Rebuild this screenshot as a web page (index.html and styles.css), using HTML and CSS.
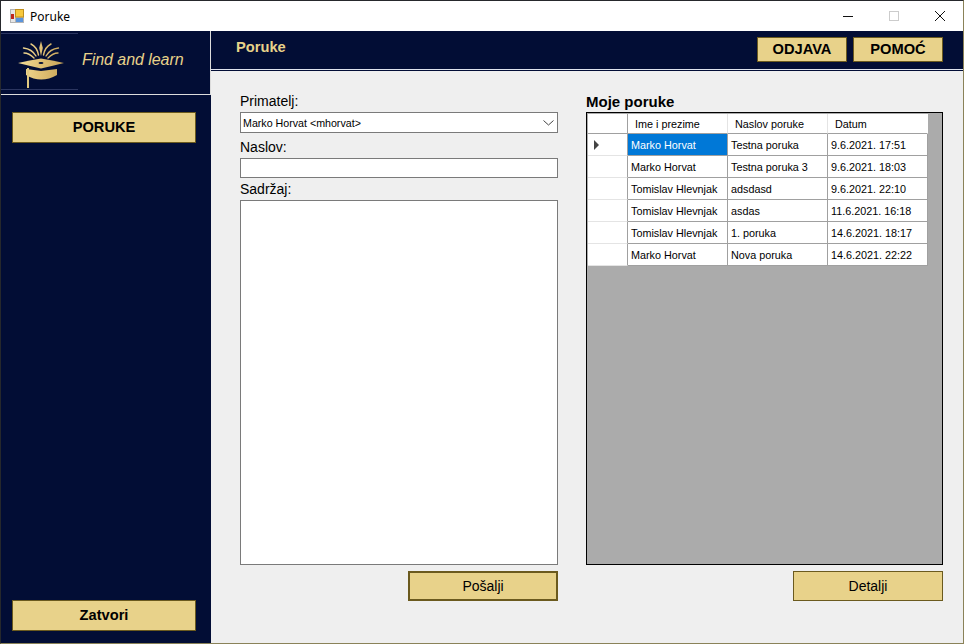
FILE: index.html
```html
<!DOCTYPE html>
<html lang="en">

<head>
  <meta charset="UTF-8">
  <meta name="viewport" content="width=device-width, initial-scale=1.0">
  <title>Poruke</title>
  <link rel="stylesheet" href="styles.css">
</head>

<body>

  <div class="window">
    <div class="titlebar">
      <svg class="app-icon" width="14" height="14" viewBox="0 0 14 14">
        <rect x="0" y="0" width="14" height="14" fill="#b4b4b4"/>
        <rect x="1" y="1" width="4" height="12" fill="#e6e6e6"/>
        <rect x="1" y="5" width="3" height="5" fill="#c0281c"/>
        <rect x="5.500" y="0.500" width="8" height="7.500" fill="#f7c83c" stroke="#c08f1c"/>
        <rect x="6" y="9" width="7" height="4" fill="#5a94dc"/>
      </svg>
      <span class="title-text">Poruke</span>
      <div class="window-controls">
        <div class="win-btn">
          <svg width="12" height="12" viewBox="0 0 12 12"><path d="M1 6.500H11" stroke="#111" fill="none"/></svg>
        </div>
        <div class="win-btn">
          <svg width="12" height="12" viewBox="0 0 12 12"><rect x="1.500" y="1.500" width="9" height="9" stroke="#ccc" fill="none"/></svg>
        </div>
        <div class="win-btn">
          <svg width="12" height="12" viewBox="0 0 12 12"><path d="M1 1L11 11M11 1L1 11" stroke="#111" fill="none"/></svg>
        </div>
      </div>
    </div>

    <div class="app">
      <div class="sidebar">
        <div class="brand">
          <div class="logo">
            <svg width="77" height="55" viewBox="1 34 77 55">
              <defs>
                <linearGradient id="gold" gradientUnits="userSpaceOnUse" x1="18" y1="0" x2="64" y2="0">
                  <stop offset="0" stop-color="#f2dc98"/>
                  <stop offset="0.5" stop-color="#e0c074"/>
                  <stop offset="1" stop-color="#c8a458"/>
                </linearGradient>
              </defs>
              <g fill="none" stroke="url(#gold)" stroke-width="1.4" stroke-linecap="round">
                <path d="M38.500 55Q37 47 31 44"/>
                <path d="M43.500 55Q45 47 51 44"/>
                <path d="M36 56Q32 49 23.500 48"/>
                <path d="M46 56Q50 49 58.500 48"/>
                <path d="M34 58Q29 53 24 53"/>
                <path d="M48 58Q53 53 58 53"/>
              </g>
              <path d="M41 41L42.800 48L41 56L39.200 48Z" fill="url(#gold)"/>
              <path d="M18 63Q30 60 41 58.500Q52 60 64 63Q52 66 41 68.500Q30 66 18 63Z" fill="url(#gold)"/>
              <ellipse cx="41" cy="63" rx="2.500" ry="1" fill="#020d35"/>
              <path d="M26 69L41 71L57 69V75Q41 84 26 75Z" fill="url(#gold)"/>
              <rect x="27" y="68" width="2" height="20" fill="#e0c880"/>
            </svg>
          </div>
          <span class="brand-name">Find and learn</span>
        </div>
        <div class="side-nav">
          <button class="gold-btn side-btn">PORUKE</button>
          <button class="gold-btn side-btn">Zatvori</button>
        </div>
      </div>

      <div class="content">
        <div class="header">
          <span class="header-title">Poruke</span>
          <div class="header-actions">
            <button class="gold-btn top-btn">ODJAVA</button>
            <button class="gold-btn top-btn">POMOĆ</button>
          </div>
        </div>

        <div class="panels">
          <div class="form-panel">
            <label class="field-label">Primatelj:</label>
            <div class="combo">
              <span>Marko Horvat &lt;mhorvat&gt;</span>
              <svg width="11" height="6" viewBox="0 0 11 6"><path d="M0.500 0.500L5.500 5L10.500 0.500" stroke="#444" fill="none"/></svg>
            </div>
            <label class="field-label">Naslov:</label>
            <div class="text-input"></div>
            <label class="field-label field-label-tight">Sadržaj:</label>
            <div class="text-area"></div>
            <div class="panel-actions">
              <button class="gold-btn form-btn form-btn-default">Pošalji</button>
            </div>
          </div>

          <div class="list-panel">
            <div class="list-title">Moje poruke</div>
            <div class="grid-box">
              <table class="grid">
                <thead>
                  <tr>
                    <th class="row-head"></th>
                    <th>Ime i prezime</th>
                    <th>Naslov poruke</th>
                    <th>Datum</th>
                  </tr>
                </thead>
                <tbody>
                  <tr>
                    <td class="row-head"><span class="row-arrow"></span></td>
                    <td class="selected">Marko Horvat</td>
                    <td>Testna poruka</td>
                    <td>9.6.2021. 17:51</td>
                  </tr>
                  <tr>
                    <td class="row-head"></td>
                    <td>Marko Horvat</td>
                    <td>Testna poruka 3</td>
                    <td>9.6.2021. 18:03</td>
                  </tr>
                  <tr>
                    <td class="row-head"></td>
                    <td>Tomislav Hlevnjak</td>
                    <td>adsdasd</td>
                    <td>9.6.2021. 22:10</td>
                  </tr>
                  <tr>
                    <td class="row-head"></td>
                    <td>Tomislav Hlevnjak</td>
                    <td>asdas</td>
                    <td>11.6.2021. 16:18</td>
                  </tr>
                  <tr>
                    <td class="row-head"></td>
                    <td>Tomislav Hlevnjak</td>
                    <td>1. poruka</td>
                    <td>14.6.2021. 18:17</td>
                  </tr>
                  <tr>
                    <td class="row-head"></td>
                    <td>Marko Horvat</td>
                    <td>Nova poruka</td>
                    <td>14.6.2021. 22:22</td>
                  </tr>
                </tbody>
              </table>
            </div>
            <div class="panel-actions">
              <button class="gold-btn form-btn">Detalji</button>
            </div>
          </div>
        </div>
      </div>
    </div>
  </div>

</body>

</html>
```

FILE: styles.css
```css
* {
  box-sizing: border-box;
}

body {
  margin: 0;
  font-family: "Liberation Sans", Arial, sans-serif;
  color: #000;
  background-color: #efefef;
}

.window {
  width: 964px;
  height: 644px;
  display: flex;
  flex-direction: column;
  border: 1px solid #8a8258;
  border-top-color: #26282c;
  border-left-color: #26282c;
  overflow: hidden;
}

.titlebar {
  height: 30px;
  flex: none;
  display: flex;
  align-items: center;
  background-color: #fff;
  padding-left: 9px;
}

.app-icon {
  margin-right: 6px;
}

.title-text {
  font-family: "Noto Sans", sans-serif;
  font-size: 12px;
}

.window-controls {
  margin-left: auto;
  display: flex;
}

.win-btn {
  width: 46px;
  height: 30px;
  display: flex;
  align-items: center;
  justify-content: center;
}

.app {
  flex: 1;
  display: flex;
  min-height: 0;
}

.sidebar {
  width: 210px;
  flex: none;
  display: flex;
  flex-direction: column;
  background-color: #020d35;
}

.brand {
  height: 64px;
  flex: none;
  display: flex;
  align-items: flex-start;
  border-bottom: 1px solid #dcdcdc;
  border-right: 1px solid #dcdcdc;
}

.logo {
  width: 77px;
  height: 57px;
  margin-top: 2px;
  border-top: 1px solid #2b3560;
  border-bottom: 1px solid #2b3560;
}

.logo svg {
  display: block;
}

.brand-name {
  margin: 20px 0 0 4px;
  font-size: 16px;
  font-style: italic;
  letter-spacing: -0.05px;
  color: #e8d28a;
}

.side-nav {
  flex: 1;
  display: flex;
  flex-direction: column;
  justify-content: space-between;
  padding: 17px 15px 12px 11px;
}

.gold-btn {
  padding: 0;
  font-family: inherit;
  color: #000;
  background-color: #e8d28a;
  border: 1px solid #6b5a1e;
  border-radius: 0;
  cursor: pointer;
}

.side-btn {
  height: 31px;
  padding-bottom: 2px;
  font-size: 14.67px;
  font-weight: bold;
}

.content {
  flex: 1;
  display: flex;
  flex-direction: column;
  min-width: 0;
}

.header {
  height: 39px;
  flex: none;
  display: flex;
  align-items: flex-start;
  justify-content: space-between;
  padding: 6px 20px 0 25px;
  background-color: #020d35;
  border-bottom: 1px solid #dfe3ee;
  box-shadow: 0 1px 0 #020d35;
}

.header-title {
  margin-top: 2px;
  font-size: 14.67px;
  font-weight: bold;
  color: #e8d28a;
}

.header-actions {
  display: flex;
  gap: 6px;
}

.top-btn {
  width: 90px;
  height: 25px;
  padding-bottom: 2px;
  font-size: 14.67px;
  font-weight: bold;
}

.panels {
  flex: 1;
  display: flex;
  gap: 28px;
  padding: 23px 20px 0 29px;
}

.form-panel {
  width: 318px;
  display: flex;
  flex-direction: column;
}

.field-label {
  display: block;
  margin-bottom: 2px;
  font-size: 14px;
  line-height: 17px;
}

.combo + .field-label,
.text-input + .field-label {
  margin-top: 6px;
}

.text-input + .field-label-tight {
  margin-top: 3px;
}

.combo {
  height: 21px;
  display: flex;
  align-items: center;
  justify-content: space-between;
  padding: 0 3px 0 2px;
  font-size: 10.67px;
  background-color: #fff;
  border: 1px solid #7a7a7a;
}

.text-input {
  height: 20px;
  background-color: #fff;
  border: 1px solid #7a7a7a;
}

.text-area {
  height: 365px;
  background-color: #fff;
  border: 1px solid #7a7a7a;
}

.panel-actions {
  display: flex;
  justify-content: flex-end;
  margin-top: 6px;
}

.form-btn {
  width: 150px;
  height: 30px;
  font-size: 14px;
}

.form-btn-default {
  border-width: 2px;
}

.list-panel {
  width: 357px;
  display: flex;
  flex-direction: column;
}

.list-title {
  height: 19px;
  font-size: 15px;
  line-height: 17px;
  font-weight: bold;
}

.grid-box {
  height: 453px;
  padding: 1px;
  background-color: #ababab;
  border: 1px solid #000;
}

.grid {
  table-layout: fixed;
  width: 340px;
  border-collapse: separate;
  border-spacing: 0;
  font-size: 10.8px;
}

.grid th,
.grid td {
  padding: 0 0 0 3px;
  text-align: left;
  font-weight: normal;
  white-space: nowrap;
  overflow: hidden;
  background-color: #fff;
  border-right: 1px solid #a0a0a0;
  border-bottom: 1px solid #a0a0a0;
}

.grid th {
  height: 20px;
  padding-left: 7px;
  border-right-color: #e4e4e4;
}

.grid td {
  height: 22px;
}

.grid th:last-child {
  border-right-color: #fff;
}

.grid .row-head {
  width: 40px;
  padding: 0 0 0 6px;
  border-bottom-color: #e4e4e4;
}

.grid th.row-head {
  border-right-color: #a0a0a0;
  border-bottom-color: #a0a0a0;
}

.grid .selected {
  color: #fff;
  background-color: #0078d7;
}

.row-arrow {
  display: block;
  width: 0;
  height: 0;
  border-top: 5px solid transparent;
  border-bottom: 5px solid transparent;
  border-left: 5px solid #444;
}
```
